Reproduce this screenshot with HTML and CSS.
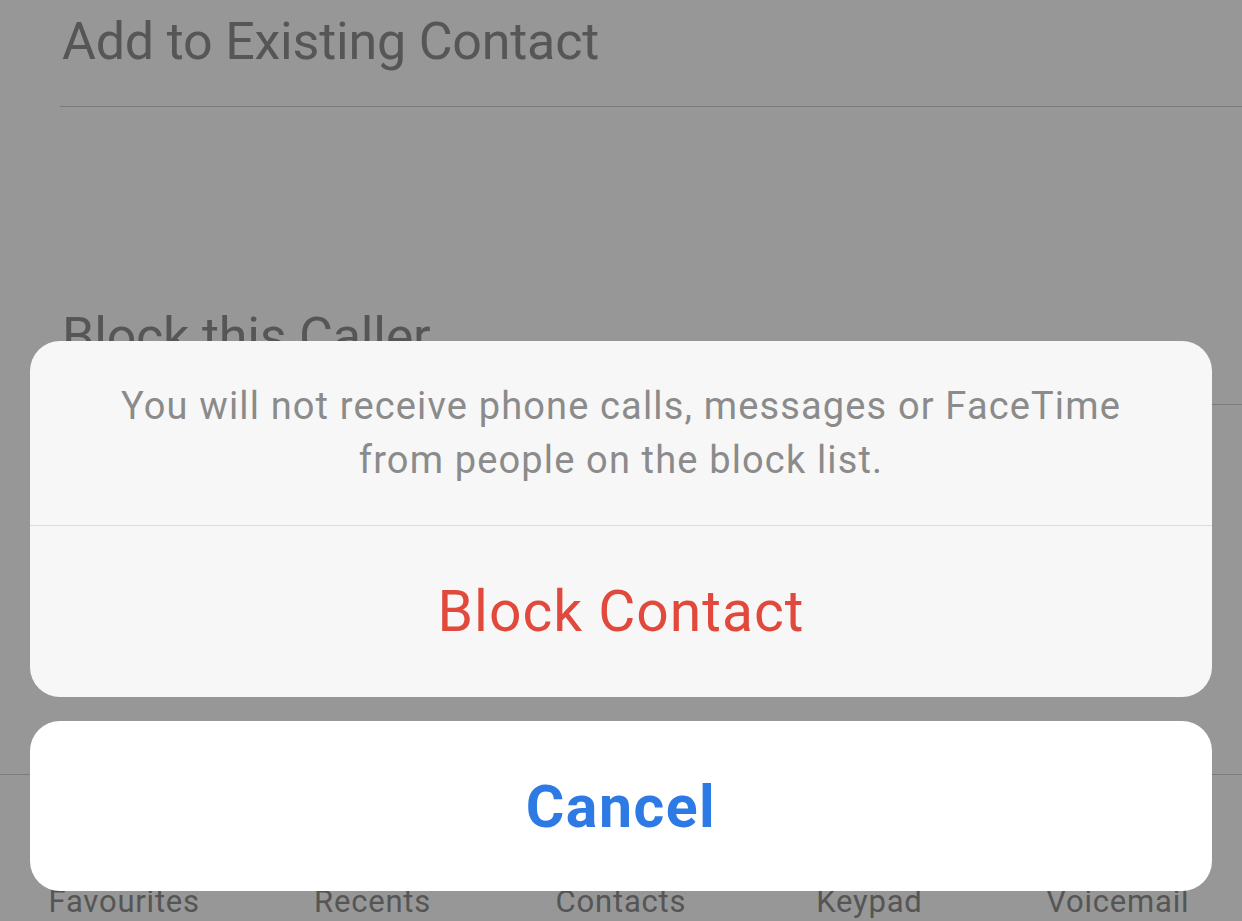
FILE: index.html
```html
<!DOCTYPE html>
<html lang="en">
<head>
<meta charset="utf-8">
<title>Block Contact</title>
<link rel="stylesheet" href="styles.css">
</head>
<body>
<div class="screen">
  <div class="row row-first">Add to Existing Contact</div>
  <div class="row row-block">Block this Caller</div>
  <nav class="tabbar">
    <span class="tab">Favourites</span>
    <span class="tab">Recents</span>
    <span class="tab">Contacts</span>
    <span class="tab">Keypad</span>
    <span class="tab">Voicemail</span>
  </nav>

  <div class="sheet-wrap">
    <div class="sheet">
      <p class="sheet-msg">You will not receive phone calls, messages or FaceTime from people on the block list.</p>
      <div class="sheet-btn destructive">Block Contact</div>
    </div>
    <div class="sheet cancel-sheet">
      <div class="sheet-btn cancel">Cancel</div>
    </div>
  </div>
</div>
</body>
</html>
```
FILE: styles.css
```css
html, body {
  margin: 0;
  padding: 0;
  height: 100%;
}
body {
  background: #979797;
  font-family: Roboto, "Liberation Sans", sans-serif;
  overflow: hidden;
}
.screen {
  position: relative;
  height: 921px;
  display: flex;
  flex-direction: column;
}
.row {
  margin-left: 60px;
  padding-left: 2px;
  font-size: 52px;
  line-height: 52px;
  letter-spacing: -0.2px;
  color: #565656;
  border-bottom: 1px solid #7b7b7b;
}
.row-first {
  padding-top: 16px;
  padding-bottom: 38px;
}
.row-block {
  margin-top: 204px;
  padding-bottom: 41px;
}
.tabbar {
  margin-top: auto;
  border-top: 1px solid #7b7b7b;
  height: 147px;
  display: grid;
  grid-template-columns: repeat(5, 1fr);
  align-items: end;
  box-sizing: border-box;
}
.tab {
  text-align: center;
  font-size: 31px;
  line-height: 28px;
  letter-spacing: 0.8px;
  color: #555555;
  padding-bottom: 5px;
}
.sheet-wrap {
  position: absolute;
  left: 30px;
  right: 30px;
  bottom: 30px;
  display: flex;
  flex-direction: column;
  gap: 24px;
}
.sheet {
  background: #f7f7f7;
  border-radius: 30px;
  overflow: hidden;
}
.sheet-msg {
  margin: 0;
  height: 185px;
  box-sizing: border-box;
  padding: 38px 80px 0;
  text-align: center;
  font-size: 38px;
  line-height: 54px;
  letter-spacing: 1.15px;
  color: #8b8b8b;
  border-bottom: 1px solid #dcdcdc;
}
.sheet-btn {
  height: 171px;
  display: flex;
  align-items: center;
  justify-content: center;
}
.destructive {
  color: #e0493b;
  font-size: 57px;
  letter-spacing: 1px;
}
.cancel-sheet {
  background: #ffffff;
}
.cancel {
  height: 170px;
  color: #2e7ae5;
  font-size: 59px;
  font-weight: 700;
  letter-spacing: 1.5px;
}
```
